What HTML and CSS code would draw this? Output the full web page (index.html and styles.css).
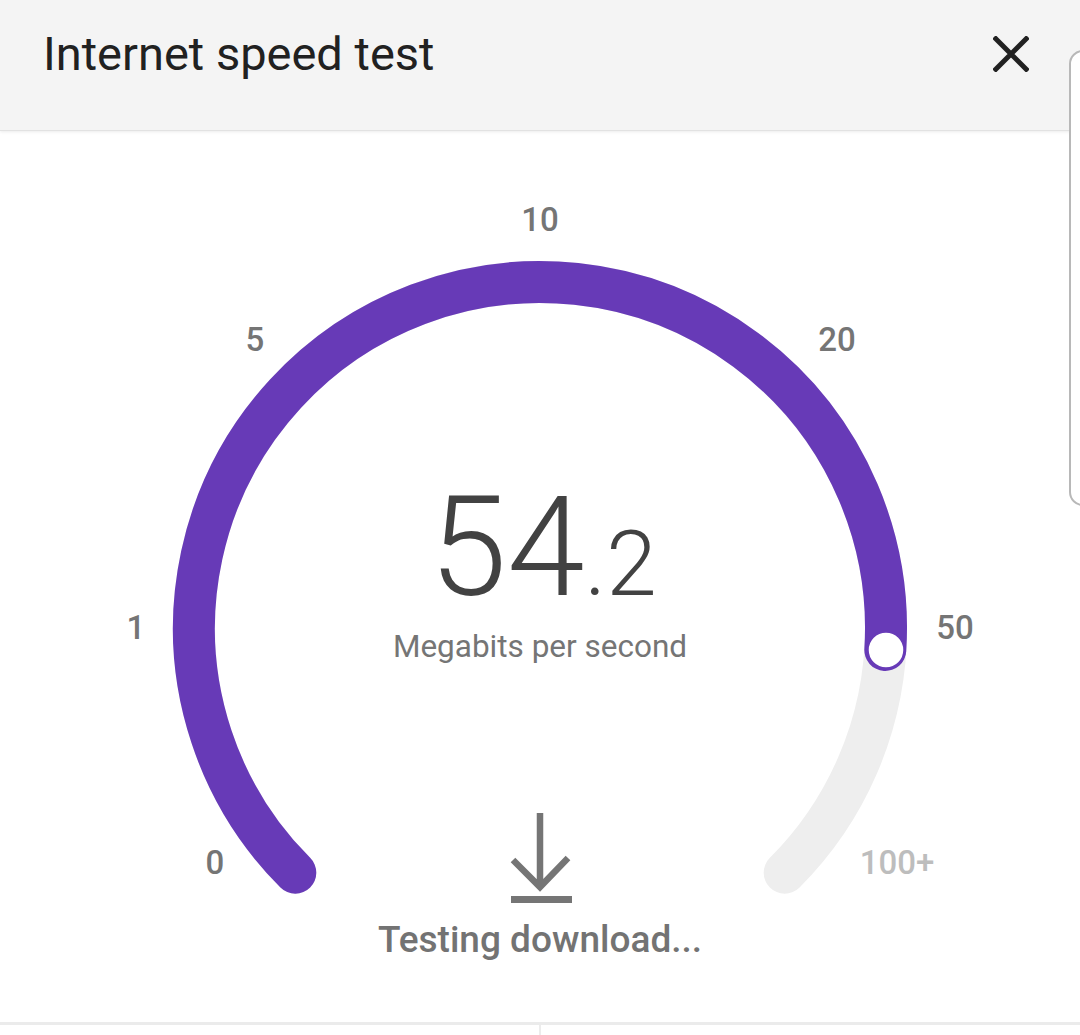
FILE: index.html
```html
<!DOCTYPE html>
<html lang="en">
<head>
<meta charset="utf-8">
<title>Internet speed test</title>
<link rel="stylesheet" href="styles.css">
</head>
<body>
<div class="app">
  <header class="topbar">
    <h1 class="title">Internet speed test</h1>
    <button class="close" aria-label="Close">
      <svg width="36" height="36" viewBox="0 0 36 36"><path d="M1 1L35 35M35 1L1 35" stroke="#212121" stroke-width="5" fill="none"/></svg>
    </button>
  </header>

  <main class="gauge">
    <svg class="dial" width="1080" height="892" viewBox="0 130 1080 892">
      <path d="M295.3 872.7 A346 346 0 1 1 784.7 872.7" fill="none" stroke="#eeeeee" stroke-width="42" stroke-linecap="round"/>
      <path d="M295.3 872.7 A346 346 0 1 1 885.3 650" fill="none" stroke="#673ab7" stroke-width="42" stroke-linecap="round"/>
      <circle cx="886" cy="650" r="18.5" fill="#ffffff" stroke="#673ab7" stroke-width="2.5"/>
      <g class="ticks">
        <text x="540" y="219">10</text>
        <text x="255" y="339">5</text>
        <text x="837" y="339">20</text>
        <text x="136" y="627">1</text>
        <text x="955" y="627">50</text>
        <text x="215" y="862">0</text>
        <text x="897" y="862" class="dim">100+</text>
      </g>
    </svg>

    <div class="readout">
      <div class="value">54<span class="frac">.2</span></div>
      <div class="unit">Megabits per second</div>
    </div>

    <div class="status">
      <svg class="dl-icon" width="64" height="96" viewBox="0 0 64 96">
        <path d="M30 3V76M3 50L30 77L58 48" stroke="#757575" stroke-width="6.5" fill="none"/>
        <rect x="1" y="86" width="61" height="7" fill="#757575"/>
      </svg>
      <div class="status-text">Testing download...</div>
    </div>
  </main>

  <footer class="tabs">
    <div class="tab"></div>
    <div class="tab"></div>
  </footer>

  <div class="scroll-edge"></div>
</div>
</body>
</html>
```

FILE: styles.css
```css
* { box-sizing: border-box; }

html, body {
  margin: 0;
  padding: 0;
  background: #ffffff;
}

body {
  font-family: Roboto, "Noto Sans", sans-serif;
  width: 1080px;
  height: 1035px;
  overflow: hidden;
}

.app {
  position: relative;
  width: 1080px;
  height: 1035px;
  display: flex;
  flex-direction: column;
}

.topbar {
  height: 130px;
  flex: none;
  background: #f4f4f4;
  display: flex;
  align-items: center;
  justify-content: space-between;
  padding: 0 51px 22px 43px;
  box-shadow: 0 1px 0 #e2e2e2, 0 2px 3px rgba(0, 0, 0, 0.08);
  position: relative;
  z-index: 1;
}

.title {
  margin: 0;
  font-size: 47px;
  line-height: 58px;
  font-weight: 400;
  color: #212121;
}

.close {
  border: 0;
  background: none;
  padding: 0;
  width: 36px;
  height: 36px;
  display: block;
}

.close svg { display: block; }

.gauge {
  position: relative;
  height: 892px;
  flex: none;
}

.dial {
  display: block;
}

.ticks text {
  font-family: Roboto, sans-serif;
  font-size: 33px;
  font-weight: 500;
  fill: #757575;
  text-anchor: middle;
  dominant-baseline: central;
}

.ticks text.dim {
  fill: #bdbdbd;
}

.readout {
  position: absolute;
  left: 0;
  right: 0;
  top: 347px;
  text-align: center;
}

.value {
  font-size: 140px;
  line-height: 1;
  font-weight: 300;
  color: #424242;
  padding-left: 6px;
}

.frac {
  font-size: 91px;
}

.unit {
  margin-top: 12px;
  font-size: 31.5px;
  color: #757575;
  line-height: 36px;
}

.status {
  position: absolute;
  left: 0;
  right: 0;
  top: 680px;
  display: flex;
  flex-direction: column;
  align-items: center;
}

.dl-icon {
  display: block;
  margin-left: 4px;
}

.status-text {
  margin-top: 14px;
  font-size: 37px;
  font-weight: 500;
  color: #737373;
  line-height: 40px;
}

.tabs {
  flex: 1;
  display: flex;
  border-top: 3px solid #ebebeb;
}

.tab {
  flex: 1;
}

.tab + .tab {
  border-left: 2px solid #ececec;
}

.scroll-edge {
  position: absolute;
  left: 1069px;
  top: 50px;
  width: 40px;
  height: 456px;
  border: 2px solid #b8b8b8;
  border-radius: 14px;
  background: #ffffff;
  z-index: 2;
}
```
